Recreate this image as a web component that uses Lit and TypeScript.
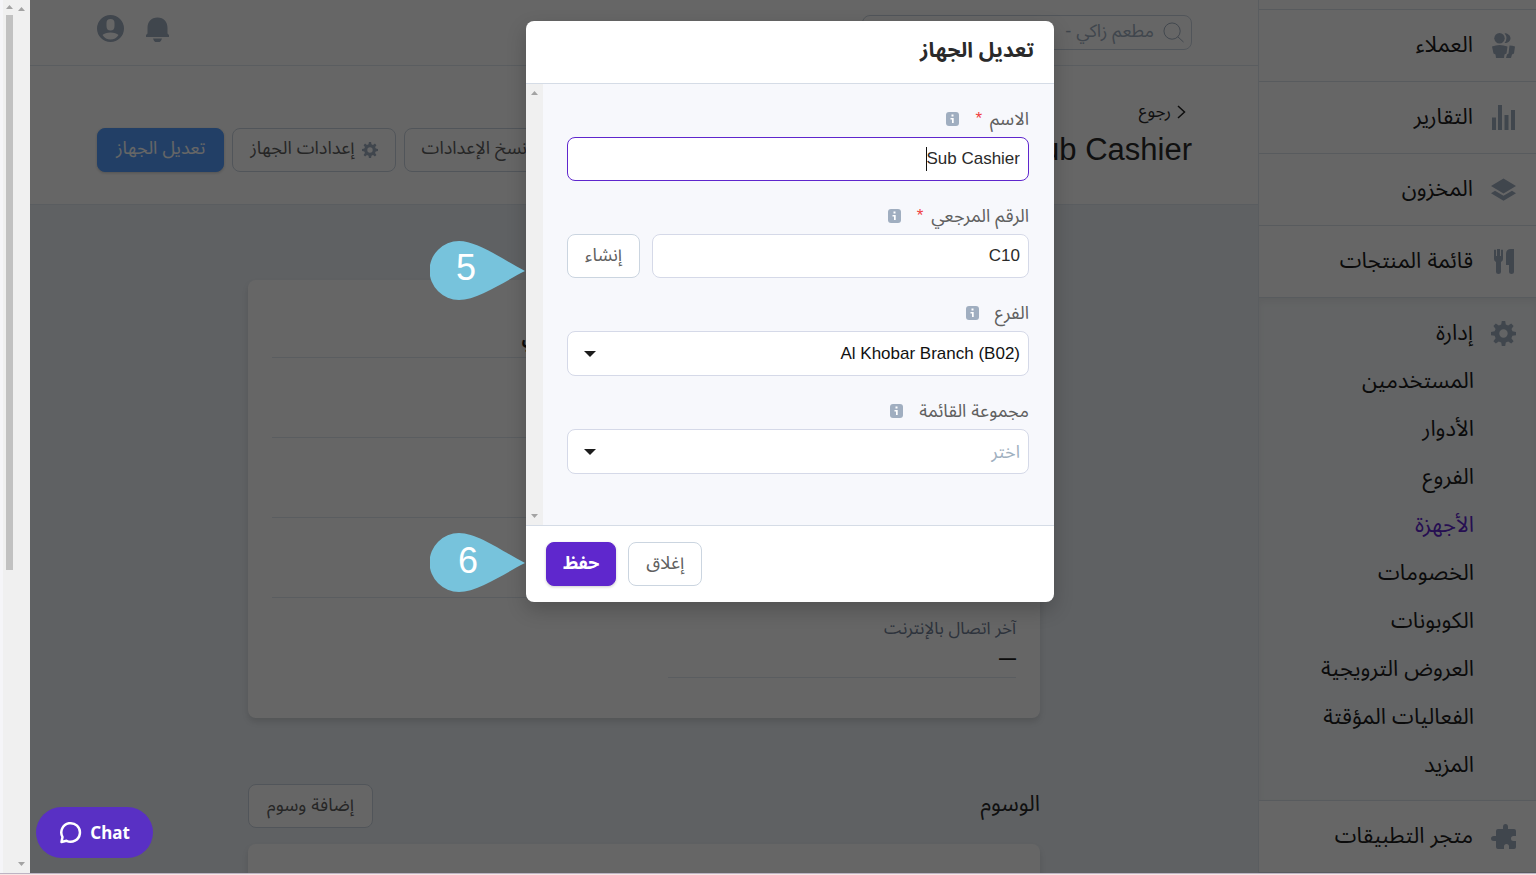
import { LitElement, html, css, svg, nothing } from "lit";
import { customElement, state } from "lit/decorators.js";
import { classMap } from "lit/directives/class-map.js";

const icons = {
  people: svg`<circle cx="8.500" cy="5.200" r="5.200"/><path d="M13.500.3c3 0 6 2 6 5s-3 5-6 4.700q4-4.700 0-9.700z"/><path d="M1 13.500q7.500-3 15.500 0l-1 7-2 1-.5 3.500H5l-.5-3.500-2-1z"/><path d="M18.500 12.500q3 0 5.500 1l-1 7-2 1-1 3.500h-5l1-3.500 1.500-1z"/>`,
  chart: svg`<path d="M1 12.500h4V25H1zM7 0h4v25H7zM13.500 10h4v15h-4zM20 5h4v20h-4z"/>`,
  layers: svg`<path d="M12.500 1.500 25 9l-12.500 7.500L0 9zM4 13.800l8.500 5 8.500-5 4 2.400-12.500 7.500L0 16.200z"/>`,
  food: svg`<path d="M3 1q1-1 2 0v6h1V0h3v7h1V1q1-1 2 0v9q0 2-2 3v10q0 2-2.500 2T5 23V13q-2-1-2-3zM23 0v23q0 2-2.500 2T18 23v-7h-3V5q0-5 5-5z"/>`,
  gear: svg`<path fill-rule="evenodd" d="M10.800 0h3.400l.6 3.600 2.400 1 3-2.100 2.400 2.400-2.100 3 1 2.400 3.500.6v3.300l-3.600.6-1 2.400 2.200 3-2.400 2.400-3-2.200-2.400 1-.6 3.600h-3.400l-.6-3.600-2.400-1-3 2.200-2.400-2.400 2.200-3-1-2.400L0 14.200v-3.300l3.600-.6 1-2.400-2.200-3 2.400-2.400 3 2.100 2.400-1zM12.500 8.300a4.200 4.200 0 1 0 0 8.400 4.200 4.200 0 0 0 0-8.400z"/>`,
  puzzle: svg`<path d="M5 7q0-2 2-2h5V3q0-3 2.500-3T17 3v2h6q2 0 2 2v5h-2.500q-2.500 0-2.500 2.500t2.500 2.500H25v6q0 2-2 2h-5v-2.500q0-2.500-2.500-2.500T13 22.500V25H7q-2 0-2-2v-6H3q-3 0-3-2.500T3 12h2z"/>`,
};
const icon = (name: keyof typeof icons) =>
  html`<svg class="icon" viewBox="0 0 25 25" aria-hidden="true">${icons[name]}</svg>`;
const info = html`<svg class="info" viewBox="0 0 13 14" role="img" aria-label="معلومات">
  <rect width="13" height="14" rx="3" fill="#a0aec0"/>
  <path d="M5.500 2.500h2v2h-2zM4.500 6h3.200v5H6V7.500H4.500z" fill="#fff"/></svg>`;

@customElement("app-root")
export class AppRoot extends LitElement {
  static styles = css`
    :host { display: block; height: 100vh; overflow: hidden; background: #fff;
      font: 18px/24px "Liberation Sans", "Noto Sans Arabic", "DejaVu Sans", sans-serif; color: #2a2a2a; }
    * { box-sizing: border-box; }
    a { color: inherit; text-decoration: none; }
    h1, h2, dl, dd, ul { margin: 0; padding: 0; font-weight: 400; list-style: none; }
    button, input, select { font: inherit; color: inherit; }
    .page { height: 100%; display: flex; flex-direction: column; }
    .frame { flex: 1; min-height: 0; display: flex; }
    .strip { height: 2px; background: #f9e5e3; border-top: 1px solid #bdb4c4; }
    .gutter { width: 30px; flex: none; display: flex; direction: ltr; background: #f0f0f0; border-left: 3px solid #f5f5f8; }
    .rail { width: 10px; padding: 3px 0 3px 3px; display: flex; flex-direction: column; }
    .rail.wide { width: 17px; align-items: center; justify-content: space-between; padding: 7px 0; }
    .rail svg { width: 7px; height: 4px; fill: #a3a3a3; flex: none; margin: 2px 0 6px; }
    .rail.wide svg { margin: 0; }
    .thumb { height: 64%; width: 7px; background: #c1c1c1; }
    .app { flex: 1; min-width: 0; display: flex; position: relative; overflow: hidden; background: #fff; }

    .side { width: 278px; flex: none; border-inline-end: 1px solid #e2e8f0; font-size: 22px; color: #1c1c1c; overflow: hidden; }
    .stub { height: 10px; border-bottom: 1px solid #dde3ea; }
    .item { height: 72px; display: flex; align-items: center; gap: 18px; padding-inline-start: 20px; border-bottom: 1px solid #dde3ea; }
    .item span { padding-bottom: 1px; }
    .icon { width: 25px; height: 25px; flex: none; fill: #a0aec0; }
    .group { background: #f7fafc; padding: 11px 0; border-bottom: 1px solid #dde3ea; box-shadow: inset 0 4px 6px #0000000d; }
    .group .item { height: 48px; border: 0; }
    .sub { display: block; height: 48px; line-height: 48px; padding-inline-start: 62px; }
    .sub.on { color: #5f27cd; }

    .main { flex: 1; min-width: 0; background: #edf2f7; overflow: hidden; }
    .top { height: 66px; background: #fff; border-bottom: 1px solid #e2e8f0; padding: 0 66px 0 67px; display: flex; justify-content: space-between; align-items: center; }
    .search { width: 330px; height: 35px; border: 1px solid #cbd5e0; border-radius: 8px; display: flex; align-items: center; gap: 9px; padding: 0 7px; color: #a0aec0; }
    .search svg { width: 21px; height: 21px; flex: none; fill: none; stroke: #a0aec0; }
    .search input { border: 0; background: none; flex: 1; min-width: 0; padding: 0 0 3px; outline: 0; }
    .search input::placeholder { color: #a0aec0; opacity: 1; }
    .tools { display: flex; gap: 20px; padding-bottom: 8px; }
    .tools button { border: 0; background: none; padding: 0; height: 27px; }
    .tools svg { width: 27px; height: 27px; fill: #a0aec0; display: block; }
    .head { height: 139px; background: #fff; border-bottom: 1px solid #e2e8f0; padding: 0 66px 0 67px; display: flex; align-items: center; justify-content: space-between; }
    .head h1 { font-size: 31px; line-height: 46px; }
    .back { display: flex; align-items: center; gap: 6px; padding-inline-start: 6px; height: 30px; font-size: 17px; }
    .back svg { width: 9px; height: 14px; fill: none; stroke: #222; stroke-width: 1.500; }
    .titles { display: flex; flex-direction: column; }
    .acts { display: flex; gap: 8px; padding-top: 29px; }
    .btn { height: 44px; padding: 0 17px 3px; border: 1px solid #cbd5e0; border-radius: 8px; background: #fff; color: #606060; display: inline-flex; align-items: center; justify-content: center; gap: 7px; white-space: nowrap; }
    .btn .icon { width: 16px; height: 16px; margin-top: 4px; }
    .btn.blue { padding-inline: 18px; background: #559fff; border-color: #559fff; color: #fff; box-shadow: 0 1px 3px #0003; }
    .btn.purple { padding-inline: 16px; background: #5f27cd; border-color: #5f27cd; color: #fff; font-weight: 700; box-shadow: 0 1px 3px #0003; }
    .wrap { max-width: 792px; margin: 0 auto; padding-top: 75px; }
    .card { background: #fff; border-radius: 8px; box-shadow: 0 4px 6px #0000001f; display: grid; grid-template-columns: 1fr 1fr; gap: 19px 48px; padding: 17px 24px 40px; }
    .cell { height: 61px; border-bottom: 1px solid #e2e8f0; color: #718096; font-size: 17px; }
    .cell dt { height: 24px; }
    .cell dd { color: #1c1c1c; padding-top: 6px; font-weight: 700; }
    .tags { display: flex; justify-content: space-between; align-items: center; padding: 66px 0 16px; }
    .tags h2 { font-size: 22px; padding-bottom: 4px; }
    .tags .btn { padding-inline: 18px; }
    .tagcard { height: 120px; background: #fff; border-radius: 8px; box-shadow: 0 4px 6px #0000001f; }

    .shade { position: absolute; inset: 0; background: #0009; display: flex; justify-content: center; align-items: flex-start; padding: 21px 0 0 14px; }
    .modal { width: 528px; background: #fff; border-radius: 8px; overflow: hidden; box-shadow: 0 8px 20px #0003; }
    .mhead { height: 63px; display: flex; align-items: center; padding: 0 20px 4px; border-bottom: 1px solid #d5dce6; }
    .mhead h2 { font-size: 21px; font-weight: 700; }
    .mbody { height: 441px; background: #f7f8fc; display: flex; }
    .fields { flex: 1; min-width: 0; padding: 23px 25px 0 24px; display: flex; flex-direction: column; gap: 23px; }
    .mscroll { width: 17px; background: #f0f0f0; display: flex; flex-direction: column; justify-content: space-between; align-items: center; padding: 7px 0; }
    .mscroll svg { width: 7px; height: 4px; fill: #a3a3a3; }
    .field { display: flex; flex-direction: column; gap: 6px; }
    .lab { display: flex; align-items: center; height: 24px; color: #606060; }
    .req { color: #f04040; margin-inline-start: 8px; font-size: 17px; }
    .info { width: 13px; height: 14px; margin-inline-start: 16px; }
    .line { display: flex; gap: 12px; position: relative; }
    .box { flex: 1; min-width: 0; width: 100%; height: 44px; border: 1px solid #d5d9e8; border-radius: 8px; background: #fff; padding: 0 8px 1px; outline: 0; appearance: none; font-size: 17px; }
    select.box { height: 45px; color: #111; padding-bottom: 0; }
    select.box.empty { color: #a0b0c0; font-size: 18px; }
    .box.focus { border-color: #5f27cd; }
    .caret { position: absolute; top: 10px; inset-inline-start: 102px; width: 1px; height: 24px; background: #111; }
    .arrow { position: absolute; left: 17px; top: 20px; width: 12px; height: 6px; fill: #1c1c1c; pointer-events: none; }
    .mfoot { border-top: 1px solid #d5dce6; padding: 16px 20px; display: flex; justify-content: flex-end; gap: 12px; }

    .pin { position: absolute; left: 400px; width: 95px; height: 59px; direction: ltr; display: flex; align-items: center; padding: 0 0 5px 26px; color: #fff; font-size: 36px; }
    .pin svg { position: absolute; inset: 0; fill: #77c3dc; }
    .pin span { position: relative; }
    .five { top: 241px; }
    .six { top: 533px; padding: 0 0 4px 28px; }
    .chat { position: absolute; left: 6px; bottom: 15px; width: 117px; height: 51px; border: 0; border-radius: 26px; background: #5930c4; color: #fff; display: flex; direction: ltr; align-items: center; justify-content: center; gap: 8px; font: 700 17px/24px "Noto Sans", "Open Sans", sans-serif; }
    .chat svg { width: 23px; height: 23px; fill: none; stroke: #fff; stroke-width: 2.500; }
  `;

  @state() private active = "الأجهزة";
  private subs = ["المستخدمين", "الأدوار", "الفروع", "الأجهزة", "الخصومات", "الكوبونات", "العروض الترويجية", "الفعاليات المؤقتة", "المزيد"];

  private item(name: keyof typeof icons, text: string) {
    return html`<a class="item" href="#">${icon(name)}<span>${text}</span></a>`;
  }
  private cell(label = "", value = "") {
    return html`<div class="cell"><dt>${label || nothing}</dt><dd>${value || nothing}</dd></div>`;
  }
  private up = html`<svg viewBox="0 0 7 4"><path d="M0 4 3.500 0 7 4z"/></svg>`;
  private down = html`<svg viewBox="0 0 7 4"><path d="M0 0h7L3.500 4z"/></svg>`;
  private arrow = html`<svg class="arrow" viewBox="0 0 12 6"><path d="M0 0h12L6 6z"/></svg>`;
  private drop = html`<svg viewBox="0 0 95 59"><path d="M95 30C75 20 48 0 29 0a29.500 29.500 0 0 0 0 59C48 59 75 40 95 30z"/></svg>`;

  render() {
    return html`<div class="page" dir="rtl" lang="ar">
      <div class="frame">
        <div class="app">
          <nav class="side">
            <div class="stub"></div>
            ${this.item("people", "العملاء")} ${this.item("chart", "التقارير")}
            ${this.item("layers", "المخزون")} ${this.item("food", "قائمة المنتجات")}
            <div class="group">
              ${this.item("gear", "إدارة")}
              ${this.subs.map((s) => html`<a href="#" class=${classMap({ sub: true, on: s === this.active })}
                @click=${() => (this.active = s)}>${s}</a>`)}
            </div>
            ${this.item("puzzle", "متجر التطبيقات")}
          </nav>
          <main class="main">
            <header class="top">
              <label class="search">
                <svg viewBox="0 0 22 22"><circle cx="9.500" cy="9.500" r="8.500"/><path d="m15.500 15.500 6 5.500"/></svg>
                <input type="search" aria-label="بحث" placeholder="مطعم زاكي -">
              </label>
              <div class="tools">
                <button aria-label="الإشعارات"><svg viewBox="0 0 27 27"><path d="M13.500 2.500C20 2.500 23.500 7 23.500 13v5.500l1.500 1.500v2H2v-2l1.500-1.500V13c0-6 3.500-10.500 10-10.500zM9 23.500h9q-1 4-4.500 4T9 23.500z"/></svg></button>
                <button aria-label="الحساب"><svg viewBox="0 0 27 27"><path fill-rule="evenodd" d="M13.500 0a13.500 13.500 0 1 1 0 27 13.500 13.500 0 0 1 0-27zM13.500 4Q9.500 4 9.500 8v3q0 4.500 4 4.500t4-4.500V8q0-4-4-4zM5.500 20q3 4.500 8 4.500t8-4.500q-2.500-2.500-8-2.500t-8 2.500z"/></svg></button>
              </div>
            </header>
            <section class="head">
              <div class="titles">
                <a class="back" href="#"><svg viewBox="0 0 9 14"><path d="m1 1 6.500 6L1 13"/></svg>رجوع</a>
                <h1>Sub Cashier</h1>
              </div>
              <div class="acts">
                <button class="btn">نسخ الإعدادات</button>
                <button class="btn">${icon("gear")}إعدادات الجهاز</button>
                <button class="btn blue">تعديل الجهاز</button>
              </div>
            </section>
            <div class="wrap">
              <dl class="card">
                ${this.cell()} ${this.cell("", "كاشير رئيسي")}
                ${this.cell()} ${this.cell()} ${this.cell()} ${this.cell()} ${this.cell()} ${this.cell()}
                ${this.cell("آخر اتصال بالإنترنت", "—")}
              </dl>
              <div class="tags"><h2>الوسوم</h2><button class="btn">إضافة وسوم</button></div>
              <div class="tagcard"></div>
            </div>
          </main>

          <div class="shade">
            <form class="modal" role="dialog" aria-labelledby="dlg" @submit=${(e: Event) => e.preventDefault()}>
              <div class="mhead"><h2 id="dlg">تعديل الجهاز</h2></div>
              <div class="mbody">
                <div class="fields">
                  <div class="field">
                    <div class="lab"><label for="name">الاسم</label><span class="req">*</span>${info}</div>
                    <div class="line"><input id="name" class="box focus" .value=${"Sub Cashier"}><span class="caret"></span></div>
                  </div>
                  <div class="field">
                    <div class="lab"><label for="ref">الرقم المرجعي</label><span class="req">*</span>${info}</div>
                    <div class="line"><input id="ref" class="box" .value=${"C10"}><button type="button" class="btn">إنشاء</button></div>
                  </div>
                  <div class="field">
                    <div class="lab"><label for="branch">الفرع</label>${info}</div>
                    <div class="line"><select id="branch" class="box"><option>&#x202A;Al Khobar Branch (B02)&#x202C;</option></select>${this.arrow}</div>
                  </div>
                  <div class="field">
                    <div class="lab"><label for="menu">مجموعة القائمة</label>${info}</div>
                    <div class="line"><select id="menu" class="box empty"><option>اختر</option></select>${this.arrow}</div>
                  </div>
                </div>
                <div class="mscroll">${this.up}${this.down}</div>
              </div>
              <div class="mfoot"><button type="button" class="btn">إغلاق</button><button class="btn purple">حفظ</button></div>
            </form>
          </div>
          <div class="pin five">${this.drop}<span>5</span></div>
          <div class="pin six">${this.drop}<span>6</span></div>
          <button class="chat"><svg viewBox="0 0 23 23"><path d="M2.500 21l1-5a9.300 9.300 0 1 1 4 3.800z" stroke-linejoin="round"/></svg>Chat</button>
        </div>
        <div class="gutter">
          <div class="rail">${this.up}<div class="thumb"></div></div>
          <div class="rail wide">${this.up}${this.down}</div>
        </div>
      </div>
      <div class="strip"></div>
    </div>`;
  }
}
